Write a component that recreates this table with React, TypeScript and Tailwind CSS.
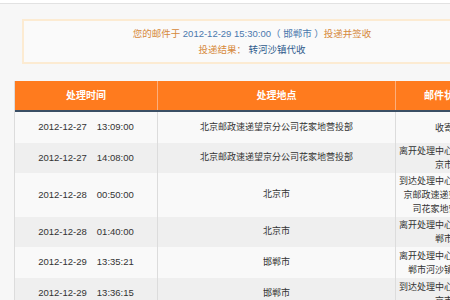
const rows = [
  { date: "2012-12-27", time: "13:09:00", place: "北京邮政速递望京分公司花家地营投部", status: ["收寄"], h: "h-[31px]", bg: "bg-[#f9f9f9]" },
  { date: "2012-12-27", time: "14:08:00", place: "北京邮政速递望京分公司花家地营投部", status: ["离开处理中心，发往北", "京市"], h: "h-[30px]", bg: "bg-[#efefef]" },
  { date: "2012-12-28", time: "00:50:00", place: "北京市", status: ["到达处理中心，来自北", "京邮政速递望京分公", "司花家地营投部"], h: "h-[44px]", bg: "bg-[#f9f9f9]" },
  { date: "2012-12-28", time: "01:40:00", place: "北京市", status: ["离开处理中心，发往邯", "郸市"], h: "h-[30px]", bg: "bg-[#efefef]" },
  { date: "2012-12-29", time: "13:35:21", place: "邯郸市", status: ["离开处理中心，发往邯", "郸市河沙镇邮政所"], h: "h-[31px]", bg: "bg-[#f9f9f9]" },
  { date: "2012-12-29", time: "13:36:15", place: "邯郸市", status: ["到达处理中心，来自北", "京市"], h: "h-[31px]", bg: "bg-[#efefef]" },
];

export default function App() {
  return (
    <div
      className="w-[450px] h-[300px] overflow-hidden bg-white"
      style={{ fontFamily: '"Liberation Sans", "Noto Sans CJK SC", sans-serif' }}
    >
      <div className="mt-[3px] border-t border-[#e2e2e2] bg-[#f7f7f7] h-[297px] pt-[15px]">
        {/* delivery notice */}
        <div className="ml-[22px] w-[460px] h-[45px] border-2 border-[#fcebd2] bg-[#fafafa] flex flex-col items-center justify-center text-[9.5px] leading-[16px]">
          <div className="text-[#d6893a]">
            您的邮件于 <span className="text-[#4a78ad]">2012-12-29 15:30:00</span>
            <span className="text-[#4a78ad]">（ 邯郸市 ）</span>投递并签收
          </div>
          <div className="text-[#d6893a]">
            投递结果： <span className="text-[#2f5b8c]">转河沙镇代收</span>
          </div>
        </div>

        {/* trace table */}
        <div className="mt-[17px] ml-[14px] w-[477px] border-l border-[#dcdcdc]">
          <div className="grid grid-cols-[143px_238px_96px] h-[31px] bg-[#ff7b1e] text-white font-bold text-[10px] border-b-2 border-[#3b4f65]">
            <div className="flex items-center justify-center border-r border-[#fcae7c]">处理时间</div>
            <div className="flex items-center justify-center border-r border-[#fcae7c]">处理地点</div>
            <div className="flex items-center justify-center">邮件状态</div>
          </div>
          {rows.map((r, i) => (
            <div key={i} className={`grid grid-cols-[143px_238px_96px] ${r.h} ${r.bg} text-[#333] text-[9.5px]`}>
              <div className="flex items-center justify-center border-r border-[#dcdcdc]">
                <span>{r.date}</span>
                <span className="ml-[10px]">{r.time}</span>
              </div>
              <div className="flex items-center justify-center border-r border-[#dcdcdc] text-[9px]">{r.place}</div>
              <div className="flex flex-col items-center justify-center text-[9px] leading-[14px] whitespace-nowrap">
                {r.status.map((s, j) => (
                  <div key={j}>{s}</div>
                ))}
              </div>
            </div>
          ))}
        </div>
      </div>
    </div>
  );
}
